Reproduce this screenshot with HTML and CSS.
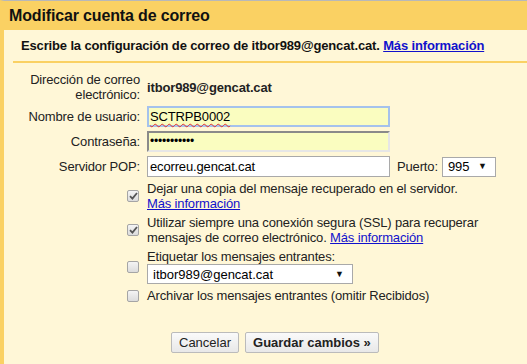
FILE: index.html
```html
<!DOCTYPE html>
<html lang="es">
<head>
<meta charset="utf-8">
<title>Modificar cuenta de correo</title>
<link rel="stylesheet" href="styles.css">
</head>
<body>
<div class="frame">
  <div class="title">Modificar cuenta de correo</div>
  <div class="panel">
    <div class="intro"><b>Escribe la configuración de correo de itbor989@gencat.cat.</b> <a href="#" class="link bold">Más información</a></div>
    <div class="form">
      <div class="row addr">
        <div class="lbl">Dirección de correo<br>electrónico:</div>
        <div class="field"><b>itbor989@gencat.cat</b></div>
      </div>
      <div class="row">
        <div class="lbl">Nombre de usuario:</div>
        <div class="field"><div class="input auto focus"><span class="spell">SCTRPB0002</span></div></div>
      </div>
      <div class="row">
        <div class="lbl">Contraseña:</div>
        <div class="field"><div class="input auto inset">&#8226;&#8226;&#8226;&#8226;&#8226;&#8226;&#8226;&#8226;&#8226;&#8226;&#8226;</div></div>
      </div>
      <div class="row">
        <div class="lbl">Servidor POP:</div>
        <div class="field port-line">
          <div class="input plain">ecorreu.gencat.cat</div>
          <span class="port-lbl">Puerto:</span>
          <div class="select small"><span>995</span><span class="arrow">&#9660;</span></div>
        </div>
      </div>
      <div class="row check">
        <div class="lbl"><span class="cb on"><svg width="9" height="8" viewBox="0 0 9 8"><path d="M1 4.2 L3.4 6.6 L8 1" fill="none" stroke="#555" stroke-width="1.8"/></svg></span></div>
        <div class="field text">Dejar una copia del mensaje recuperado en el servidor.<br><a href="#" class="link">Más información</a></div>
      </div>
      <div class="row check">
        <div class="lbl"><span class="cb on"><svg width="9" height="8" viewBox="0 0 9 8"><path d="M1 4.2 L3.4 6.6 L8 1" fill="none" stroke="#555" stroke-width="1.8"/></svg></span></div>
        <div class="field text">Utilizar siempre una conexión segura (SSL) para recuperar<br>mensajes de correo electrónico. <a href="#" class="link">Más información</a></div>
      </div>
      <div class="row check">
        <div class="lbl"><span class="cb"></span></div>
        <div class="field text">Etiquetar los mensajes entrantes:
          <div class="select wide"><span>itbor989@gencat.cat</span><span class="arrow">&#9660;</span></div>
        </div>
      </div>
      <div class="row check">
        <div class="lbl"><span class="cb"></span></div>
        <div class="field text">Archivar los mensajes entrantes (omitir Recibidos)</div>
      </div>
      <div class="buttons">
        <button class="btn">Cancelar</button>
        <button class="btn bold">Guardar cambios »</button>
      </div>
    </div>
  </div>
</div>
</body>
</html>
```
FILE: styles.css
```css
html, body {
  margin: 0;
  padding: 0;
  height: 100%;
}
body {
  font-family: "Liberation Sans", Arial, sans-serif;
  font-size: 13px;
  letter-spacing: -0.15px;
  color: #222;
  background: #fff7d7;
}
.frame {
  min-height: 100%;
  box-sizing: border-box;
  border-top: 1px solid #b8b8b8;
  border-left: 4px solid #fad163;
  background: #fff7d7;
}
.title {
  background: #fad163;
  height: 29px;
  margin-left: -4px;
  padding-left: 9px;
  font-size: 16px;
  font-weight: bold;
  color: #111;
  line-height: 29px;
}
.panel {
  padding-left: 9px;
}
.intro {
  padding: 8px;
  line-height: 15px;
  border-bottom: 2px solid #fad163;
  color: #111;
}
.link {
  color: #1111cc;
  text-decoration: underline;
}
.bold { font-weight: bold; }
.form {
  padding-top: 9px;
  display: flex;
  flex-direction: column;
  gap: 4px;
}
.row {
  display: flex;
  align-items: center;
}
.lbl {
  width: 127px;
  flex: none;
  text-align: right;
  line-height: 15px;
}
.field {
  margin-left: 7px;
  line-height: 15px;
}
.input {
  box-sizing: border-box;
  width: 243px;
  height: 21px;
  padding: 0 2px;
  line-height: 19px;
  font-size: 13px;
  color: #000;
  background: #fff;
  border: 1px solid #a9a9a9;
}
.input.auto { background: #fafdc0; }
.input.focus {
  border: 2px solid #a5c2ec;
  padding: 0 1px;
  line-height: 17px;
}
.spell {
  text-decoration: underline wavy #e03030;
  text-decoration-thickness: 1px;
  text-underline-offset: 2px;
}
.input.inset {
  border-width: 2px;
  border-style: solid;
  border-color: #8a8a8a #e6e6e6 #e6e6e6 #8a8a8a;
  padding: 0 1px;
  font-size: 12px;
  letter-spacing: -0.2px;
  line-height: 17px;
}
.port-line {
  display: flex;
  align-items: center;
}
.port-lbl {
  margin-left: 7px;
  margin-right: 4px;
}
.select {
  box-sizing: border-box;
  height: 20px;
  border: 1px solid #a9a9a9;
  background: #fff;
  color: #000;
  display: flex;
  align-items: center;
  justify-content: space-between;
  padding: 0 8px 0 5px;
  font-size: 13px;
  letter-spacing: 0;
}
.select.small { width: 54px; }
.select.wide { width: 206px; }
.arrow { font-size: 9px; color: #111; }
.check .lbl {
  display: flex;
  justify-content: flex-end;
  padding-right: 1px;
  box-sizing: border-box;
}
.cb {
  box-sizing: border-box;
  width: 12px;
  height: 12px;
  border: 1px solid #a5a5a5;
  border-radius: 2px;
  background: linear-gradient(#f4f4f4, #dcdcdc);
  display: flex;
  align-items: center;
  justify-content: center;
}
.text { color: #222; }
.buttons {
  margin-top: 25px;
  padding-left: 158px;
  display: flex;
  gap: 6px;
}
.btn {
  height: 21px;
  font-family: "Liberation Sans", Arial, sans-serif;
  font-size: 13px;
  color: #222;
  padding: 0 7px;
  border: 1px solid #bbb;
  border-radius: 2px;
  background: linear-gradient(#fafafa, #e8e8e8);
}
```
